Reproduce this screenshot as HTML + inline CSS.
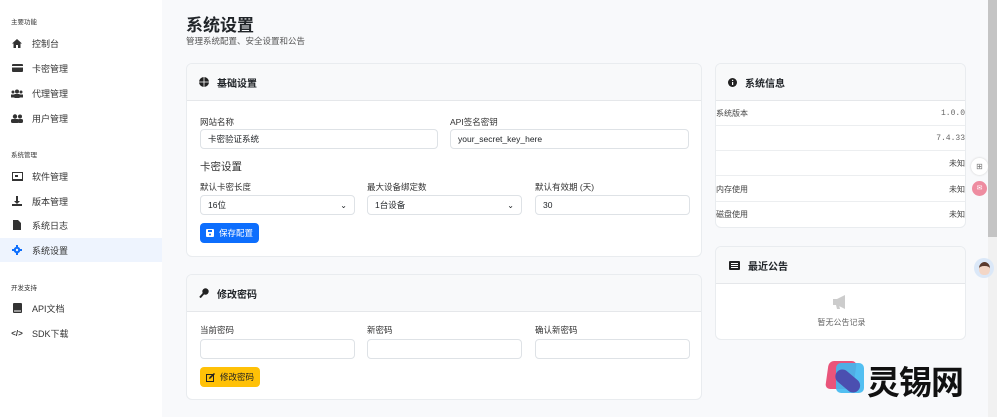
<!DOCTYPE html><html><head><meta charset="utf-8"><style>
*{box-sizing:border-box;margin:0;padding:0}
body{width:997px;height:417px;overflow:hidden;background:#f8f9fb;font-family:"Liberation Sans","Noto Sans CJK SC",sans-serif;color:#212529;position:relative}
.sb{position:absolute;left:0;top:0;width:162px;height:417px;background:#fff}
.sec{position:absolute;left:11px;font-size:6.5px;color:#333}
.it{position:absolute;left:0;width:162px;height:24px;display:flex;align-items:center;font-size:9px;color:#333}
.it .ic{width:12px;margin-left:11px;margin-right:9px;display:flex;justify-content:center}
.it.act{background:#eef4fe}
.card{position:absolute;background:#fff;border:1px solid #e9ecef;border-radius:6px;overflow:hidden}
.ch{height:37px;background:#f8f9fa;border-bottom:1px solid #e5e7ea;display:flex;align-items:center;padding-left:12px;font-size:10px;font-weight:bold}
.ch svg{margin-right:8px}
.lbl{position:absolute;font-size:8.5px;color:#333}
.inp{position:absolute;height:20px;border:1px solid #dee2e6;border-radius:4px;font-size:8.5px;padding-left:7px;display:flex;align-items:center;background:#fff}
.btn{position:absolute;height:20px;border-radius:4px;font-size:8.5px;display:flex;align-items:center;padding-left:6px}
.row{position:absolute;left:0;width:251px;height:25px;border-bottom:1px solid #eceef0;font-size:8px;color:#444;display:flex;align-items:center;justify-content:space-between;padding-right:2px}
.mono{font-family:"Liberation Mono",monospace;color:#666;font-size:8px}
</style></head><body>
<div class="sb">
<div class="sec" style="top:16px">主要功能</div>
<div class="it" style="top:31px"><span class="ic"><svg width="10" height="9" viewBox="0 0 10 9"><path d="M5 0L0 4.5h1.5V9h2.5V6h2v3h2.5V4.5H10z" fill="#333"/></svg></span>控制台</div>
<div class="it" style="top:56px"><span class="ic"><svg width="11" height="8"><rect x="0" y="0" width="11" height="8" rx="1" fill="#333"/><rect x="0" y="2" width="11" height="1.5" fill="#fff"/></svg></span>卡密管理</div>
<div class="it" style="top:81px"><span class="ic"><svg width="12" height="9"><circle cx="6" cy="2.5" r="2" fill="#333"/><circle cx="2" cy="3" r="1.5" fill="#333"/><circle cx="10" cy="3" r="1.5" fill="#333"/><rect x="3" y="5" width="6" height="4" rx="1" fill="#333"/><rect x="0" y="5.5" width="3" height="3" fill="#333"/><rect x="9" y="5.5" width="3" height="3" fill="#333"/></svg></span>代理管理</div>
<div class="it" style="top:106px"><span class="ic"><svg width="12" height="9"><circle cx="4" cy="2.5" r="2.2" fill="#333"/><circle cx="9" cy="2.5" r="2" fill="#333"/><rect x="0" y="5" width="8" height="4" rx="1.5" fill="#333"/><rect x="7" y="5" width="5" height="4" rx="1.5" fill="#333"/></svg></span>用户管理</div>
<div class="sec" style="top:149px">系统管理</div>
<div class="it" style="top:164px"><span class="ic"><svg width="11" height="9"><rect x="0.5" y="0.5" width="10" height="7" fill="none" stroke="#333"/><rect x="3" y="3" width="3" height="2" fill="#333"/><rect x="0" y="8" width="11" height="1" fill="#333"/></svg></span>软件管理</div>
<div class="it" style="top:189px"><span class="ic"><svg width="10" height="10"><path d="M4 0h2v5h2L5 8 2 5h2z" fill="#333"/><rect x="0" y="8" width="10" height="2" fill="#333"/></svg></span>版本管理</div>
<div class="it" style="top:213px"><span class="ic"><svg width="8" height="10"><path d="M0 0h5l3 3v7H0z" fill="#333"/></svg></span>系统日志</div>
<div class="it act" style="top:238px;color:#333"><span class="ic"><svg width="10" height="10" viewBox="0 0 10 10"><circle cx="5" cy="5" r="3.3" fill="#0d6efd"/><circle cx="5" cy="5" r="1.2" fill="#eef4fe"/><path d="M4 0h2v2H4zM4 8h2v2H4zM0 4h2v2H0zM8 4h2v2H8z" fill="#0d6efd"/></svg></span>系统设置</div>
<div class="sec" style="top:282px">开发支持</div>
<div class="it" style="top:296px"><span class="ic"><svg width="9" height="10"><rect width="9" height="10" rx="1" fill="#333"/><rect x="1" y="7.5" width="7" height="1" fill="#fff"/></svg></span>API文档</div>
<div class="it" style="top:321px"><span class="ic" style="font-size:8px;font-weight:bold">&lt;/&gt;</span>SDK下载</div>
</div>

<div style="position:absolute;left:186px;top:11px;font-size:17px;font-weight:bold">系统设置</div>
<div style="position:absolute;left:186px;top:35px;font-size:8.5px;color:#555">管理系统配置、安全设置和公告</div>

<div class="card" style="left:186px;top:63px;width:516px;height:194px">
<div class="ch"><svg width="10" height="10"><circle cx="5" cy="5" r="5" fill="#222"/><path d="M5 0v10M0 5h10" stroke="#fff" stroke-width=".8"/></svg>基础设置</div>
<div class="lbl" style="left:13px;top:52px">网站名称</div>
<div class="inp" style="left:13px;top:65px;width:238px">卡密验证系统</div>
<div class="lbl" style="left:263px;top:52px">API签名密钥</div>
<div class="inp" style="left:263px;top:65px;width:239px">your_secret_key_here</div>
<div style="position:absolute;left:13px;top:95px;font-size:10.5px;color:#333">卡密设置</div>
<div class="lbl" style="left:13px;top:117px">默认卡密长度</div>
<div class="inp" style="left:13px;top:131px;width:155px">16位<span style="position:absolute;right:7px;font-size:8px">⌄</span></div>
<div class="lbl" style="left:180px;top:117px">最大设备绑定数</div>
<div class="inp" style="left:180px;top:131px;width:155px">1台设备<span style="position:absolute;right:7px;font-size:8px">⌄</span></div>
<div class="lbl" style="left:348px;top:117px">默认有效期 (天)</div>
<div class="inp" style="left:348px;top:131px;width:155px">30</div>
<div class="btn" style="left:13px;top:159px;width:59px;background:#0d6efd;color:#fff"><svg width="8" height="8" style="margin-right:5px"><rect width="8" height="8" rx="1" fill="#fff"/><rect x="2" y="1" width="4" height="2" fill="#0d6efd"/><circle cx="4" cy="5.5" r="1" fill="#0d6efd"/></svg>保存配置</div>
</div>

<div class="card" style="left:186px;top:274px;width:516px;height:126px">
<div class="ch"><svg width="10" height="10"><circle cx="6.5" cy="3.5" r="3.2" fill="#222"/><path d="M5 5L1 9.5" stroke="#222" stroke-width="2"/></svg>修改密码</div>
<div class="lbl" style="left:13px;top:49px">当前密码</div>
<div class="inp" style="left:13px;top:64px;width:155px"></div>
<div class="lbl" style="left:180px;top:49px">新密码</div>
<div class="inp" style="left:180px;top:64px;width:155px"></div>
<div class="lbl" style="left:348px;top:49px">确认新密码</div>
<div class="inp" style="left:348px;top:64px;width:155px"></div>
<div class="btn" style="left:13px;top:92px;width:60px;background:#ffc107;color:#222"><svg width="9" height="9" style="margin-right:5px"><rect x=".5" y="1.5" width="7" height="7" fill="none" stroke="#222"/><path d="M3 6l.5-2L8 0l1 1-4.5 4.5z" fill="#222"/></svg>修改密码</div>
</div>

<div class="card" style="left:715px;top:63px;width:251px;height:165px">
<div class="ch" style="padding-left:12px"><svg width="9" height="9"><circle cx="4.5" cy="4.5" r="4.5" fill="#222"/><rect x="4" y="4" width="1.2" height="3" fill="#fff"/><circle cx="4.6" cy="2.4" r=".7" fill="#fff"/></svg>系统信息</div>
<div class="row" style="top:37px">系统版本<span class="mono">1.0.0</span></div>
<div class="row" style="top:62px"><span></span><span class="mono">7.4.33</span></div>
<div class="row" style="top:87px"><span></span><span>未知</span></div>
<div class="row" style="top:113px">内存使用<span>未知</span></div>
<div class="row" style="top:138px;border:none">磁盘使用<span>未知</span></div>
</div>

<div class="card" style="left:715px;top:246px;width:251px;height:94px">
<div class="ch"><svg width="11" height="9" style="margin-left:1px"><rect width="11" height="9" rx="1" fill="#222"/><rect x="2" y="2" width="7" height="1" fill="#fff"/><rect x="2" y="4" width="7" height="1" fill="#fff"/><rect x="2" y="6" width="7" height="1" fill="#fff"/></svg>最近公告</div>
<svg width="16" height="14" style="position:absolute;left:117px;top:48px"><path d="M0 4h4l8-4v14l-8-4H0zM3 10h3l1 4H4z" fill="#ccc"/></svg>
<div style="position:absolute;left:0;width:251px;top:70px;text-align:center;font-size:8px;color:#666">暂无公告记录</div>
</div>

<div style="position:absolute;left:988px;top:0;width:9px;height:237px;background:#c4c4c4"></div>
<div style="position:absolute;left:988px;top:237px;width:9px;height:180px;background:#f1f1f1"></div>
<div style="position:absolute;left:971px;top:158px;width:17px;height:17px;border-radius:50%;background:#fff;box-shadow:0 0 2px #ccc;font-size:8px;color:#777;text-align:center;line-height:17px">⊞</div>
<div style="position:absolute;left:972px;top:181px;width:15px;height:15px;border-radius:50%;background:#ee8ca0;color:#fff;font-size:7px;text-align:center;line-height:15px">✉</div>
<div style="position:absolute;left:974px;top:258px;width:20px;height:20px;border-radius:50%;background:#dbe8f8"><div style="margin:4px auto 0;width:11px;height:13px;border-radius:50% 50% 40% 40%;background:#f3d6c6;border-top:4px solid #5a3a2e"></div></div>

<div style="position:absolute;left:827px;top:361px;width:28px;height:28px;border-radius:5px;background:#e9547a;transform:skewX(-8deg)"></div>
<div style="position:absolute;left:836px;top:363px;width:28px;height:30px;border-radius:5px;background:#3fb8f0;opacity:.9"></div>
<div style="position:absolute;left:833px;top:365px;width:28px;height:14px;border-radius:7px;background:#4b4fb0;transform:rotate(40deg);transform-origin:0 50%;left:837px"></div>
<div style="position:absolute;left:867px;top:356px;font-size:33px;font-weight:bold;color:#111;letter-spacing:-1px">灵锡网</div>
</body></html>
